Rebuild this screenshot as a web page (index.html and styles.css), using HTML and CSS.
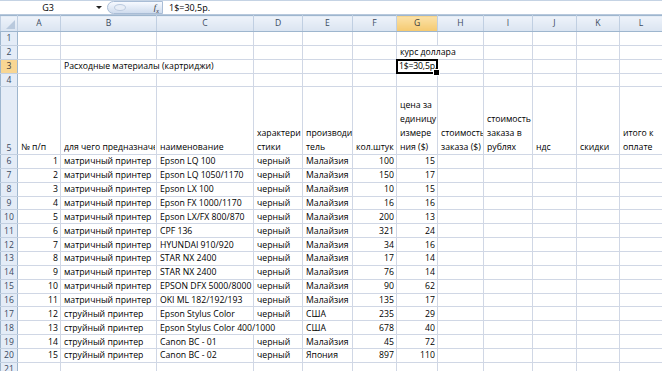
FILE: index.html
```html
<!DOCTYPE html>
<html lang="ru">
  <head>
    <meta charset="UTF-8" />
    <title>Расходные материалы</title>
    <link rel="stylesheet" href="styles.css">
  </head>
  <body>
    <div class="formula-bar">
      <div class="name-box">
        <span class="name">G3</span>
        <span class="name-arrow"></span>
      </div>
      <div class="fx-capsule">
        <span class="capsule-lens"></span>
        <span class="fx">f<sub>x</sub></span>
      </div>
      <div class="formula">1$=30,5р.</div>
    </div>

    <table class="sheet">
      <colgroup>
        <col class="c-rh"><col class="c-a"><col class="c-b"><col class="c-c"><col class="c-d"><col class="c-e">
        <col class="c-f"><col class="c-g"><col class="c-h"><col class="c-i"><col class="c-j"><col class="c-k"><col class="c-l">
      </colgroup>
      <thead>
        <tr class="col-head">
          <th class="corner"><span class="corner-mark"></span></th>
          <th>A</th><th>B</th><th>C</th><th>D</th><th>E</th><th>F</th>
          <th class="sel">G</th><th>H</th><th>I</th><th>J</th><th>K</th><th>L</th>
        </tr>
      </thead>
      <tbody>
        <tr><th>1</th><td></td><td></td><td></td><td></td><td></td><td></td><td></td><td></td><td></td><td></td><td></td><td></td></tr>
        <tr><th>2</th><td></td><td></td><td></td><td></td><td></td><td></td><td colspan="2">курс доллара</td><td></td><td></td><td></td><td></td></tr>
        <tr><th class="sel">3</th><td></td><td colspan="2">Расходные материалы (картриджи)</td><td></td><td></td><td></td><td class="active">1$=30,5р.</td><td></td><td></td><td></td><td></td><td></td></tr>
        <tr><th>4</th><td></td><td></td><td></td><td></td><td></td><td></td><td></td><td></td><td></td><td></td><td></td><td></td></tr>
        <tr class="tall">
          <th>5</th>
          <td>№ п/п</td>
          <td><span class="clip">для чего предназначения</span></td>
          <td>наименование</td>
          <td>характери<br>стики</td>
          <td>производи<br>тель</td>
          <td>кол.штук</td>
          <td>цена за<br>единицу<br>измере<br>ния ($)</td>
          <td>стоимость<br>заказа ($)</td>
          <td>стоимость<br>заказа в<br>рублях</td>
          <td>ндс</td>
          <td>скидки</td>
          <td>итого к<br>оплате</td>
        </tr>
        <tr><th>6</th><td class="num">1</td><td>матричный принтер</td><td>Epson LQ 100</td><td>черный</td><td>Малайзия</td><td class="num">100</td><td class="num">15</td><td></td><td></td><td></td><td></td><td></td></tr>
        <tr><th>7</th><td class="num">2</td><td>матричный принтер</td><td>Epson LQ 1050/1170</td><td>черный</td><td>Малайзия</td><td class="num">150</td><td class="num">17</td><td></td><td></td><td></td><td></td><td></td></tr>
        <tr><th>8</th><td class="num">3</td><td>матричный принтер</td><td>Epson LX 100</td><td>черный</td><td>Малайзия</td><td class="num">10</td><td class="num">15</td><td></td><td></td><td></td><td></td><td></td></tr>
        <tr><th>9</th><td class="num">4</td><td>матричный принтер</td><td>Epson FX 1000/1170</td><td>черный</td><td>Малайзия</td><td class="num">16</td><td class="num">16</td><td></td><td></td><td></td><td></td><td></td></tr>
        <tr><th>10</th><td class="num">5</td><td>матричный принтер</td><td>Epson LX/FX 800/870</td><td>черный</td><td>Малайзия</td><td class="num">200</td><td class="num">13</td><td></td><td></td><td></td><td></td><td></td></tr>
        <tr><th>11</th><td class="num">6</td><td>матричный принтер</td><td>CPF 136</td><td>черный</td><td>Малайзия</td><td class="num">321</td><td class="num">24</td><td></td><td></td><td></td><td></td><td></td></tr>
        <tr><th>12</th><td class="num">7</td><td>матричный принтер</td><td>HYUNDAI 910/920</td><td>черный</td><td>Малайзия</td><td class="num">34</td><td class="num">16</td><td></td><td></td><td></td><td></td><td></td></tr>
        <tr><th>13</th><td class="num">8</td><td>матричный принтер</td><td>STAR NX 2400</td><td>черный</td><td>Малайзия</td><td class="num">17</td><td class="num">14</td><td></td><td></td><td></td><td></td><td></td></tr>
        <tr><th>14</th><td class="num">9</td><td>матричный принтер</td><td>STAR NX 2400</td><td>черный</td><td>Малайзия</td><td class="num">76</td><td class="num">14</td><td></td><td></td><td></td><td></td><td></td></tr>
        <tr><th>15</th><td class="num">10</td><td>матричный принтер</td><td>EPSON DFX 5000/8000</td><td>черный</td><td>Малайзия</td><td class="num">90</td><td class="num">62</td><td></td><td></td><td></td><td></td><td></td></tr>
        <tr><th>16</th><td class="num">11</td><td>матричный принтер</td><td>OKI ML 182/192/193</td><td>черный</td><td>Малайзия</td><td class="num">135</td><td class="num">17</td><td></td><td></td><td></td><td></td><td></td></tr>
        <tr><th>17</th><td class="num">12</td><td>струйный принтер</td><td>Epson Stylus Color</td><td>черный</td><td>США</td><td class="num">235</td><td class="num">29</td><td></td><td></td><td></td><td></td><td></td></tr>
        <tr><th>18</th><td class="num">13</td><td>струйный принтер</td><td colspan="2">Epson Stylus Color 400/1000</td><td>США</td><td class="num">678</td><td class="num">40</td><td></td><td></td><td></td><td></td><td></td></tr>
        <tr><th>19</th><td class="num">14</td><td>струйный принтер</td><td>Canon BC - 01</td><td>черный</td><td>Малайзия</td><td class="num">45</td><td class="num">72</td><td></td><td></td><td></td><td></td><td></td></tr>
        <tr><th>20</th><td class="num">15</td><td>струйный принтер</td><td>Canon BC - 02</td><td>черный</td><td>Япония</td><td class="num">897</td><td class="num">110</td><td></td><td></td><td></td><td></td><td></td></tr>
        <tr><th>21</th><td></td><td></td><td></td><td></td><td></td><td></td><td></td><td></td><td></td><td></td><td></td><td></td></tr>
      </tbody>
    </table>
  </body>
</html>
```

FILE: styles.css
```css
:root {
  --grid-line: #d0d7e5;
  --head-line: #9eb6ce;
  --head-bg: #e4ecf7;
  --head-text: #3b4a5e;
  --sel-bg: #f8d693;
}

* {
  box-sizing: border-box;
}

body {
  margin: 0;
  width: 662px;
  height: 371px;
  overflow: hidden;
  background: #fff;
  font-family: "Open Sans", "Liberation Sans", sans-serif;
  color: #000;
}

/* formula bar */
.formula-bar {
  display: flex;
  align-items: center;
  height: 15px;
  border-top: 1px solid #c5d3e4;
  border-bottom: 1px solid #b7c8dc;
}

.name-box {
  display: flex;
  align-items: center;
  width: 104px;
}

.name {
  width: 96px;
  text-align: center;
  font-size: 9px;
}

.name-arrow {
  width: 0;
  height: 0;
  border-left: 3px solid transparent;
  border-right: 3px solid transparent;
  border-top: 3px solid #222;
}

.fx-capsule {
  display: flex;
  align-items: center;
  justify-content: space-between;
  width: 56px;
  height: 13px;
  margin-left: 3px;
  padding: 0 3px 0 6px;
  border: 1px solid #a9bdd6;
  border-radius: 7px 0 0 7px;
  background: linear-gradient(#f7faff, #cfdcee);
}

.capsule-lens {
  width: 12px;
  height: 7px;
  border-radius: 50%;
  background: #e8eef7;
  border: 1px solid #bccbdf;
}

.fx {
  font-family: "Liberation Serif", serif;
  font-style: italic;
  font-size: 9px;
  color: #333;
}

.fx sub {
  font-size: 6px;
}

.formula {
  padding-left: 6px;
  font-size: 9px;
}

/* sheet */
.sheet {
  border-collapse: collapse;
  table-layout: fixed;
  width: 662px;
  font-size: 8.7px;
}

.c-rh { width: 17px; }
.c-a { width: 43px; }
.c-b { width: 96px; }
.c-c { width: 97px; }
.c-d { width: 49px; }
.c-e { width: 50px; }
.c-f { width: 44px; }
.c-g { width: 41px; }
.c-h { width: 46px; }
.c-i { width: 49px; }
.c-j { width: 44px; }
.c-k { width: 43px; }
.c-l { width: 43px; }

.sheet tr {
  height: 13.86px;
}

.sheet tr.col-head {
  height: 16px;
}

.sheet tr.tall {
  height: 67.6px;
}

.sheet td {
  border: 1px solid var(--grid-line);
  padding: 0 2px 0 3px;
  line-height: 11.5px;
  white-space: nowrap;
  overflow: hidden;
  vertical-align: bottom;
}

.sheet tr.tall td {
  line-height: 14px;
}

.sheet td.num {
  text-align: right;
}

.clip {
  display: block;
  width: 91px;
  overflow: hidden;
}

.sheet th {
  padding: 0;
  font-weight: normal;
  font-size: 8.6px;
  line-height: 11.5px;
  color: var(--head-text);
  background: var(--head-bg);
  border: 1px solid var(--head-line);
  text-align: center;
  vertical-align: middle;
}

.sheet tbody th {
  border-color: #c3d0e1 var(--head-line);
  vertical-align: bottom;
}

.col-head th {
  background: linear-gradient(#eef3fa, #dae4f1);
  border-color: var(--head-line) #c0cfe2;
}

.sheet th.sel {
  background: linear-gradient(#fbe2a9, #f5c96f);
  color: #3a3a3a;
}

.sheet tbody th.sel {
  background: var(--sel-bg);
}

.corner {
  position: relative;
}

.corner-mark {
  position: absolute;
  right: 2px;
  bottom: 2px;
  width: 0;
  height: 0;
  border-left: 9px solid transparent;
  border-bottom: 9px solid #b9c9dd;
}

/* active cell */
.sheet td.active {
  position: relative;
  overflow: visible;
  padding-left: 2px;
  letter-spacing: -0.2px;
}

.sheet td.active::after {
  content: "";
  position: absolute;
  inset: -1px;
  border: 2px solid #000;
}

.sheet td.active::before {
  content: "";
  position: absolute;
  right: -3px;
  bottom: -3px;
  width: 5px;
  height: 5px;
  background: #000;
  border: 1px solid #fff;
  z-index: 1;
}
```
